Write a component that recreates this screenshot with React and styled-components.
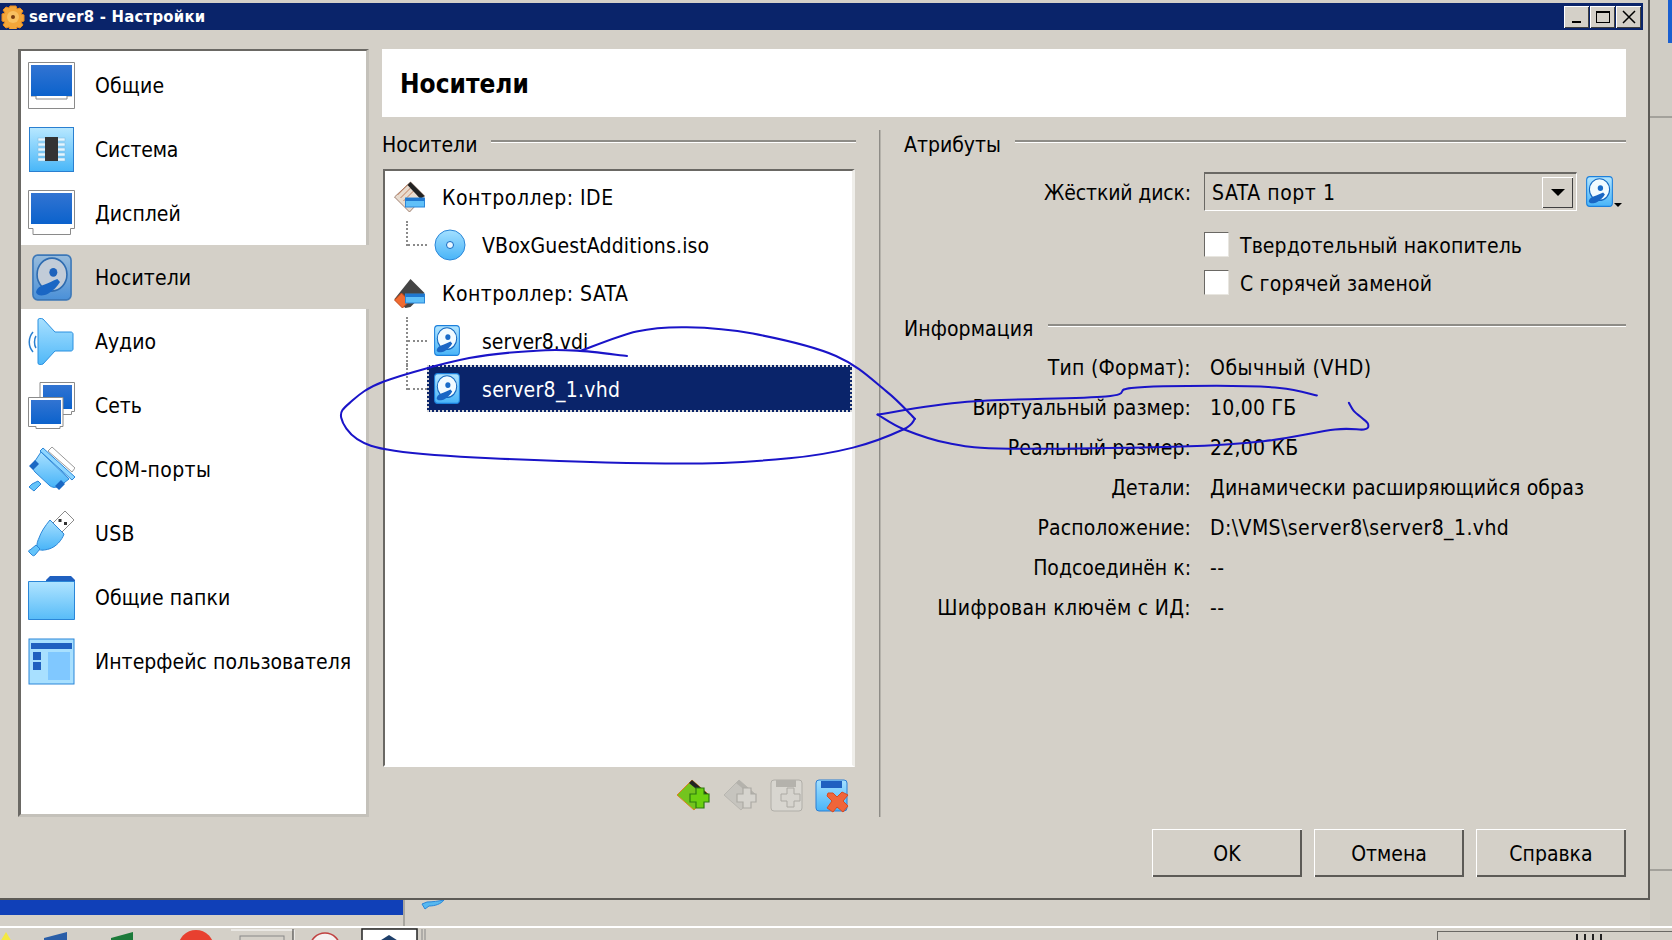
import React from "react";
import styled, { createGlobalStyle } from "styled-components";

const Global = createGlobalStyle`
  html, body { margin: 0; padding: 0; background: #d4d0c8; }
  * { box-sizing: border-box; }
`;

const FONT = `"DejaVu Sans Condensed", "DejaVu Sans", "Noto Sans", sans-serif`;

const Page = styled.div`
  position: relative;
  width: 1672px;
  height: 940px;
  overflow: hidden;
  background: #d4d0c8;
  font-family: ${FONT};
  font-size: 21px;
  color: #000;
  display: flex;
  flex-direction: column;
`;
const Txt = styled.span`
  display: inline-block;
  padding-top: 2px;
  white-space: nowrap;
  letter-spacing: ${(p) => p.$ls || 0}px;
`;
const Desk = styled.div`display: flex; height: 926px; flex: none;`;
const Left = styled.div`width: 1650px; flex: none; display: flex; flex-direction: column;`;
const Win = styled.div`
  height: 900px;
  padding-top: 3px;
  border-right: 2px solid #5c5a56;
  border-bottom: 2px solid #5c5a56;
  display: flex;
  flex-direction: column;
`;
const TitleBar = styled.div`
  height: 27px;
  flex: none;
  margin-right: 5px;
  background: #0a246a;
  display: flex;
  align-items: center;
  padding: 0 1px;
  color: #fff;
  font-weight: 700;
  font-size: 16.5px;
`;
const TitleText = styled.span`margin-left: 4px; letter-spacing: 0.25px;`;
const TitleBtns = styled.div`margin-left: auto; display: flex; gap: 1px; margin-right: 1px;`;
const TitleBtn = styled.div`
  width: 25px;
  height: 22px;
  background: #d4d0c8;
  box-shadow: inset 1px 1px 0 #fff, inset -1px -1px 0 #404040;
  display: flex;
  align-items: center;
  justify-content: center;
`;
const Body = styled.div`
  padding: 19px 22px 0 18px;
  display: flex;
  flex-direction: column;
`;
const Main = styled.div`display: flex; gap: 13px; height: 768px;`;
const Sidebar = styled.div`
  width: 351px;
  flex: none;
  background: #fff;
  border-style: solid;
  border-width: 2px 3px 3px 3px;
  border-color: #6a6864 #c4c1ba #c4c1ba #6a6864;
  padding-top: 2px;
`;
const NavRow = styled.div`
  height: 64px;
  display: flex;
  align-items: center;
  gap: 20px;
  padding-left: 7px;
  background: ${(p) => (p.$active ? "#d4d0c8" : "transparent")};
  margin-right: ${(p) => (p.$active ? "-3px" : "0")};
`;
const IconSlot = styled.div`width: 47px; height: 47px; flex: none; display: flex; align-items: center; justify-content: center;`;
const Content = styled.div`flex: 1; display: flex; flex-direction: column; min-width: 0;`;
const Header = styled.div`
  height: 68px;
  flex: none;
  background: #fff;
  display: flex;
  align-items: center;
  padding: 2px 0 0 18px;
  font-weight: 700;
  font-size: 26px;
`;
const Panes = styled.div`
  margin-top: 13px;
  flex: 1;
  display: grid;
  grid-template-columns: 474px 2px 722px;
  column-gap: 23px;
`;
const Pane = styled.div`display: flex; flex-direction: column; min-width: 0;`;
const Sep = styled.div`background: #8e8c87; border-right: 1px solid #b5b2ab;`;
const Legend = styled.div`
  height: 28px;
  flex: none;
  display: flex;
  align-items: center;
  gap: 14px;
  margin-top: ${(p) => p.$top || 0}px;
`;
const LegendLine = styled.div`
  flex: 1;
  height: 3px;
  margin-bottom: 6px;
  background: #8e8c87;
  border-bottom: 1px solid #fff;
`;
const Tree = styled.div`
  margin: 11px 0 0 1px;
  width: 472px;
  height: 598px;
  flex: none;
  background: #fff;
  border-style: solid;
  border-width: 2px 3px 2px 2px;
  border-color: #6a6864 #efeeea #fff #6a6864;
  padding-top: 2px;
`;
const TreeRow = styled.div`
  height: 48px;
  display: flex;
  align-items: center;
  gap: 16px;
  padding-left: ${(p) => (p.$child ? 21 : 8)}px;
`;
const Branch = styled.div`
  position: relative;
  width: 21px;
  height: ${(p) => (p.$last ? 25 : 48)}px;
  flex: none;
  align-self: flex-start;
  margin-right: -16px;
  border-left: 2px dotted #8a8a8a;
  &::after {
    content: "";
    position: absolute;
    left: 0;
    top: 23px;
    width: 19px;
    border-top: 2px dotted #8a8a8a;
  }
`;
const TreeItem = styled.div`
  flex: 1;
  height: 47px;
  align-self: flex-start;
  display: flex;
  align-items: center;
  gap: 16px;
  padding-left: 7px;
  ${(p) =>
    p.$selected
      ? `background:#0a246a;color:#fff;outline:2px dotted #d8d8d8;outline-offset:-2px;`
      : ""}
`;
const TreeIcon = styled.div`width: 32px; flex: none; display: flex;`;
const IconBar = styled.div`
  flex: 1;
  display: flex;
  align-items: center;
  padding: 8px 7px 0 0;
  justify-content: flex-end;
  gap: 11px;
`;
const FormRow = styled.div`
  display: grid;
  grid-template-columns: 287px 1fr;
  column-gap: 13px;
  align-items: center;
  height: ${(p) => p.$h}px;
  margin-top: ${(p) => p.$top || 0}px;
`;
const RightLabel = styled.div`text-align: right; white-space: nowrap;`;
const ComboWrap = styled.div`display: flex; align-items: center; gap: 9px;`;
const Combo = styled.div`
  width: 373px;
  height: 39px;
  background: #d4d0c8;
  border-style: solid;
  border-width: 2px 1px 1px 1px;
  border-color: #6a6864 #fff #fff #6a6864;
  display: flex;
  align-items: center;
  justify-content: space-between;
  padding: 0 3px 0 7px;
`;
const ComboBtn = styled.div`
  width: 31px;
  height: 31px;
  background: #d4d0c8;
  box-shadow: inset 1px 1px 0 #fff, inset -1px -1px 0 #404040;
  display: flex;
  align-items: center;
  justify-content: center;
`;
const Arrow = styled.div`
  width: 0;
  height: 0;
  border-left: ${(p) => p.$s}px solid transparent;
  border-right: ${(p) => p.$s}px solid transparent;
  border-top: ${(p) => p.$s}px solid #000;
`;
const ToolBtn = styled.div`display: flex; align-items: flex-end; gap: 1px;`;
const CheckRow = styled.div`display: flex; align-items: center; gap: 11px;`;
const Box = styled.div`
  width: 25px;
  height: 25px;
  flex: none;
  background: #fff;
  border-style: solid;
  border-width: 1px;
  border-color: #6a6864 #e8e6e0 #e8e6e0 #6a6864;
`;
const Value = styled.div`padding-left: 6px; white-space: nowrap;`;
const Footer = styled.div`
  margin-top: 12px;
  display: flex;
  justify-content: flex-end;
  gap: 12px;
`;
const Button = styled.div`
  width: 150px;
  height: 48px;
  background: #d4d0c8;
  box-shadow: inset 1px 1px 0 #fff, inset -2px -2px 0 #5c5a56;
  display: flex;
  align-items: center;
  justify-content: center;
`;
const Below = styled.div`display: flex; height: 26px; flex: none;`;
const BlueBar = styled.div`
  width: 403px;
  height: 15px;
  background: #1040b8;
  flex: none;
`;
const BelowRest = styled.div`
  flex: 1;
  border-left: 2px solid #a8a69f;
  padding-left: 16px;
  display: flex;
  align-items: flex-start;
`;
const RightStrip = styled.div`
  flex: 1;
  display: flex;
  flex-direction: column;
  align-items: stretch;
  background: #d0cdc5;
`;
const StripSeg = styled.div`
  height: ${(p) => p.$h}px;
  flex: none;
  border-bottom: 2px solid #a3a19b;
  display: flex;
  justify-content: flex-end;
  align-items: flex-start;
`;
const StripBlue = styled.div`width: 4px; height: 43px; background: #1a5fd0;`;
const Taskbar = styled.div`
  flex: 1;
  border-top: 2px solid #fff;
  background: #d4d0c8;
  display: flex;
  overflow: hidden;
`;
const TaskIcons = styled.svg`width: 460px; height: 14px; flex: none;`;
const Tray = styled.div`
  margin: 3px 0 0 auto;
  width: 235px;
  border-top: 1px solid #6a6864;
  border-left: 1px solid #6a6864;
  background: #d4d0c8;
  display: flex;
  justify-content: flex-end;
  padding-right: 78px;
  gap: 14px;
`;
const TrayTick = styled.div`width: 2px; height: 8px; background: #222; margin-top: 2px; box-shadow: 8px 0 0 #222;`;
const Ink = styled.svg`
  position: absolute;
  left: 0;
  top: 0;
  width: 1672px;
  height: 940px;
  pointer-events: none;
`;

const Grad = ({ id, a, b }) => (
  <linearGradient id={id} x1="0" y1="0" x2="0" y2="1">
    <stop offset="0" stopColor={a} />
    <stop offset="1" stopColor={b} />
  </linearGradient>
);

const Gear = () => (
  <svg width="24" height="24" viewBox="0 0 24 24">
    <path d="M9 1h6l1 3 3-1 3 3-2 3 3 1v6l-3 1 2 3-3 3-3-1-1 3H9l-1-3-3 1-3-3 2-3-3-1V9l3-1-2-3 3-3 3 1z" fill="#f2a63a" stroke="#e88a20" strokeWidth="1" />
    <circle cx="12" cy="12" r="6" fill="#f8c060" />
    <circle cx="12" cy="12" r="2" fill="#7a3d10" />
  </svg>
);

const Monitor = ({ id, notch }) => (
  <svg width="47" height="47" viewBox="0 0 47 47">
    <defs><Grad id={id} a="#3274d2" b="#0b62cc" /></defs>
    {notch ? (
      <>
        <path d="M.5.5h46v46H.5z" fill="#fff" stroke="#8a8a8a" />
        <path d="M3 34h5v3h31v-3h5" fill="none" stroke="#8a8a8a" />
      </>
    ) : (
      <path d="M.5.5h46v38h-4v6H5v-6H.5z" fill="#fff" stroke="#8a8a8a" />
    )}
    <rect x="3" y="3" width="41" height="31" fill={`url(#${id})`} />
  </svg>
);

const Chip = () => (
  <svg width="47" height="47" viewBox="0 0 47 47">
    <defs><Grad id="chipg" a="#b8e8ff" b="#48b6f8" /></defs>
    <rect x="1.500" y="1.500" width="44" height="44" fill="url(#chipg)" stroke="#2a7fd0" />
    {[13, 18, 23, 28, 33].map((y) => (
      <rect key={y} x="10" y={y - 1} width="27" height="3" fill="#e4f6ff" stroke="#7fb8dc" strokeWidth=".5" />
    ))}
    <rect x="17" y="11" width="13" height="24" fill="#333" />
  </svg>
);

const Disk = ({ size = 31, w = 26, muted, id }) => (
  <svg width={w} height={size} viewBox="0 0 30 32" preserveAspectRatio="none">
    <defs>
      {muted ? <Grad id={id} a="#98bcdc" b="#4a90d8" /> : <Grad id={id} a="#b4e6ff" b="#48b4f8" />}
    </defs>
    <rect x=".7" y=".7" width="28.6" height="30.6" rx="3.5" fill={`url(#${id})`} stroke={muted ? "#3d78b8" : "#1c80dc"} strokeWidth="1.2" />
    <circle cx="15" cy="14" r="11.2" fill={muted ? "#c2ccd8" : "#f2fbff"} stroke={muted ? "#2f6cb0" : "#1468c0"} strokeWidth="1.2" />
    <circle cx="16" cy="12.5" r="3" fill={muted ? "#1d62bc" : "#1a6cc8"} />
    <path d="M3 26c1-3 3-4 6-5 3-1 7-3 10-4l2 2c-2 3-5 6-9 8-3 1.500-8 2-9-1z" fill="#1a66c4" />
  </svg>
);

const Speaker = () => (
  <svg width="47" height="47" viewBox="0 0 47 47">
    <defs><Grad id="spk" a="#a8e0ff" b="#50b8f8" /></defs>
    <path d="M5 14C0 20 0 28 5 34" fill="none" stroke="#2a7fd0" strokeWidth="1.500" />
    <path d="M8 18c-2 3-2 9 0 12" fill="none" stroke="#2a7fd0" strokeWidth="1.500" />
    <path d="M10 15V2c0-2 3-2 5-1l12 13h16c1 0 2 1 2 2v15c0 1-1 2-2 2H27L15 46c-2 1-5 1-5-1z" fill="url(#spk)" stroke="#2a90e0" />
  </svg>
);

const Network = () => (
  <svg width="47" height="47" viewBox="0 0 47 47">
    <defs><Grad id="net" a="#3274d2" b="#0b62cc" /></defs>
    <path d="M12 .5h34.500v29h-3v3H12z" fill="#fff" stroke="#8a8a8a" />
    <rect x="15" y="3" width="29" height="24" fill="url(#net)" />
    <path d="M.5 15.500h34.500v29h-3v2H8v-2H.5z" fill="#fff" stroke="#8a8a8a" />
    <rect x="3" y="18" width="30" height="24" fill="url(#net)" />
  </svg>
);

const Com = () => (
  <svg width="47" height="47" viewBox="0 0 47 47">
    <defs><Grad id="com" a="#a8e0ff" b="#48b4f8" /></defs>
    <path d="M24 1l23 21-3 4L20 5z" fill="#fff" stroke="#9a9a9a" />
    <path d="M15 2l32 29-3 3L12 5z" fill="#8ed6ff" stroke="#2a86d8" />
    <path d="M13 6l28 27-9 7c-4 2-8 2-11-1L7 26c-3-3-2-8 0-11z" fill="url(#com)" stroke="#2a86d8" />
    <path d="M1 20l6-6 4 4-6 6zM27 40l6-6 4 4-6 6z" fill="#1a68c4" />
    <path d="M10 35l3 3-7 7-5-4 3-3z" fill="#64c4fa" stroke="#2a86d8" />
  </svg>
);

const Usb = () => (
  <svg width="47" height="47" viewBox="0 0 47 47">
    <defs><Grad id="usb" a="#a8e0ff" b="#48b4f8" /></defs>
    <path d="M25 13L37 1l9 9-12 12z" fill="#fff" stroke="#8a8a8a" />
    <rect x="30.500" y="9" width="3" height="3" fill="#333" />
    <rect x="36" y="12" width="3" height="3" fill="#333" />
    <path d="M22 10l14 14c-2 6-8 13-15 15-4 1-8 2-11 0-2-2-1-7 1-11 2-6 6-12 11-18z" fill="url(#usb)" stroke="#2a86d8" />
    <path d="M8 35l4 4-5 6c-1 1-2 1-3 0l-3-3c-1-1 0-2 1-2z" fill="#64c4fa" stroke="#2a86d8" />
  </svg>
);

const Folder = () => (
  <svg width="47" height="47" viewBox="0 0 47 47">
    <defs><Grad id="fold" a="#b0e4ff" b="#58bcf8" /></defs>
    <path d="M18 6l4-4h21l4 4v4H18z" fill="#1f60c0" />
    <path d="M.5 7.500H18l2 0h26.500v38H.5z" fill="url(#fold)" stroke="#2a86d8" />
  </svg>
);

const UiWin = () => (
  <svg width="47" height="47" viewBox="0 0 47 47">
    <rect x="1" y="1" width="45" height="45" fill="#a8e0ff" stroke="#2a86d8" />
    <rect x="3" y="5" width="41" height="6" fill="#1f60c0" />
    <rect x="5" y="14" width="8" height="8" fill="#1f60c0" />
    <rect x="5" y="24" width="8" height="8" fill="#1f60c0" />
    <rect x="20" y="14" width="22" height="28" fill="#80c8ff" />
  </svg>
);

const Ctrl = ({ sata }) => (
  <svg width="33" height="32" viewBox="0 0 32 32">
    {sata ? (
      <>
        <path d="M1 22L17 2l14 14-14 14-5 1z" fill="#444" />
        <path d="M1 23l7-7 8 8-7 7z" fill="#f06a30" stroke="#c04818" />
      </>
    ) : (
      <>
        <path d="M1 16L17 1l14 14-15 16z" fill="#e8dcd0" stroke="#a08070" />
        <path d="M4 14l10-10M7 17l10-10M10 20l10-10" stroke="#c08060" />
        <path d="M17 1l14 14-4 3L14 4z" fill="#222" />
      </>
    )}
    <rect x="12" y="17" width="19" height="9" fill="#60c0f8" stroke="#2a86d8" />
    <rect x="12" y="17" width="19" height="3" fill="#1f78d0" />
  </svg>
);

const Cd = () => (
  <svg width="32" height="32" viewBox="0 0 32 32">
    <defs><Grad id="cd" a="#a4e0ff" b="#48b4f8" /></defs>
    <circle cx="16" cy="16" r="15" fill="url(#cd)" stroke="#2a86d8" />
    <circle cx="16" cy="16" r="3.500" fill="#e8f6ff" stroke="#1468c0" />
  </svg>
);

const Plus = ({ fill, stroke }) => (
  <path d="M17 14h6v-6h8v6h5v8h-5v6h-8v-6h-6z" transform="translate(-3 2)" fill={fill} stroke={stroke} strokeWidth="1.200" />
);

const AddCtrl = () => (
  <svg width="36" height="36" viewBox="0 0 36 36">
    <path d="M1 17L16 2l16 14-14 16z" fill="#74c41e" stroke="#e08020" />
    <path d="M16 2l17 15-3 2L13 5z" fill="#222" />
    <Plus fill="#6cd010" stroke="#2c7a10" />
  </svg>
);
const AddCtrlGray = () => (
  <svg width="36" height="36" viewBox="0 0 36 36">
    <path d="M1 17L16 2l16 14-14 16z" fill="#c6c4be" stroke="#b8b6b0" />
    <path d="M16 2l17 15-3 2L13 5z" fill="#b4b2ac" />
    <Plus fill="#d6d4ce" stroke="#acaaa4" />
  </svg>
);
const AddDiskGray = () => (
  <svg width="34" height="34" viewBox="0 0 34 34">
    <rect x="1" y="1" width="31" height="31" rx="3" fill="#d8d6d0" stroke="#b0aea8" />
    <rect x="6" y="1" width="20" height="7" fill="#b4b2ac" />
    <path d="M11 15h6v-6h7v6h6v7h-6v6h-7v-6h-6z" fill="#d6d4ce" stroke="#acaaa4" />
  </svg>
);
const DelDisk = () => (
  <svg width="34" height="34" viewBox="0 0 34 34">
    <defs><Grad id="del" a="#a4e0ff" b="#48b4f8" /></defs>
    <rect x="1" y="1" width="31" height="31" rx="3" fill="url(#del)" stroke="#2a7ed4" />
    <rect x="6" y="2" width="21" height="7" fill="#1f60c0" />
    <path d="M13 14l5 0 4 4 5-5 6 3-5 6 5 5-5 6-6-5-4 5-6-4 5-7-5-5z" fill="#f0653a" stroke="#d94a20" />
  </svg>
);

function smooth(pts) {
  let d = `M${pts[0][0]} ${pts[0][1]}`;
  for (let i = 0; i < pts.length - 1; i++) {
    const p0 = pts[i - 1] || pts[i];
    const p1 = pts[i];
    const p2 = pts[i + 1];
    const p3 = pts[i + 2] || p2;
    const c1 = [p1[0] + (p2[0] - p0[0]) / 6, p1[1] + (p2[1] - p0[1]) / 6];
    const c2 = [p2[0] - (p3[0] - p1[0]) / 6, p2[1] - (p3[1] - p1[1]) / 6];
    d += `C${c1[0].toFixed(1)} ${c1[1].toFixed(1)} ${c2[0].toFixed(1)} ${c2[1].toFixed(1)} ${p2[0]} ${p2[1]}`;
  }
  return d;
}

const STROKES = [
  [[588,334],[541,329],[503,329],[440,336],[360,358],[328,378],[320,392],[335,412],[370,423],[460,430],[640,435],[740,430],[800,420],[847,403],[858,393]],
  [[858,393],[831,367],[784,334],[706,313],[644,307],[597,311],[545,329]],
  [[823,389],[907,377],[1037,372],[1061,364],[1141,362],[1200,364],[1235,371]],
  [[823,389],[848,403],[890,416],[947,421],[1108,419],[1185,414],[1252,403],[1279,403],[1283,398],[1277,392],[1270,386],[1265,378]],
];

const NAV = [
  ["Общие", <Monitor id="m1" notch />, false, 0.2],
  ["Система", <Chip />, false, -0.15],
  ["Дисплей", <Monitor id="m2" />, false, 0],
  ["Носители", <Disk size={47} w={40} muted id="dnav" />, true, 0.1],
  ["Аудио", <Speaker />, false, 0],
  ["Сеть", <Network />, false, 0],
  ["COM-порты", <Com />, false, 0.35],
  ["USB", <Usb />, false, 0.3],
  ["Общие папки", <Folder />, false, 0.1],
  ["Интерфейс пользователя", <UiWin />, false, 0.05],
];

const INFO = [
  ["Тип (Формат):", "Обычный (VHD)", 0.25, 0.55],
  ["Виртуальный размер:", "10,00 ГБ", 0.05, 0.25],
  ["Реальный размер:", "22,00 КБ", 0.12, 0.25],
  ["Детали:", "Динамически расширяющийся образ", 0, 0.13],
  ["Расположение:", "D:\\VMS\\server8\\server8_1.vhd", 0.1, 0.42],
  ["Подсоединён к:", "--", 0, 0.4],
  ["Шифрован ключём с ИД:", "--", 0.3, 0.4],
];

export default function App() {
  return (
    <Page>
      <Global />
      <Desk>
        <Left>
          <Win>
            <TitleBar>
              <Gear />
              <TitleText>server8 - Настройки</TitleText>
              <TitleBtns>
                <TitleBtn>
                  <svg width="14" height="14" viewBox="0 0 14 14"><rect x="2" y="11" width="9" height="2" fill="#000" /></svg>
                </TitleBtn>
                <TitleBtn>
                  <svg width="16" height="14" viewBox="0 0 16 14"><rect x="1.500" y="1.500" width="13" height="11" fill="none" stroke="#000" /><rect x="1" y="1" width="14" height="2" fill="#000" /></svg>
                </TitleBtn>
                <TitleBtn>
                  <svg width="16" height="16" viewBox="0 0 16 16"><path d="M2 2l12 12M14 2L2 14" stroke="#000" strokeWidth="1.500" /></svg>
                </TitleBtn>
              </TitleBtns>
            </TitleBar>
            <Body>
              <Main>
                <Sidebar>
                  {NAV.map(([label, icon, active, ls]) => (
                    <NavRow key={label} $active={active}>
                      <IconSlot>{icon}</IconSlot>
                      <Txt $ls={ls}>{label}</Txt>
                    </NavRow>
                  ))}
                </Sidebar>
                <Content>
                  <Header>Носители</Header>
                  <Panes>
                    <Pane>
                      <Legend>
                        <Txt>Носители</Txt>
                        <LegendLine />
                      </Legend>
                      <Tree>
                        <TreeRow>
                          <Ctrl />
                          <Txt $ls={0.5}>Контроллер: IDE</Txt>
                        </TreeRow>
                        <TreeRow $child>
                          <Branch $last />
                          <TreeItem><TreeIcon><Cd /></TreeIcon><Txt $ls={0.15}>VBoxGuestAdditions.iso</Txt></TreeItem>
                        </TreeRow>
                        <TreeRow>
                          <Ctrl sata />
                          <Txt $ls={0.5}>Контроллер: SATA</Txt>
                        </TreeRow>
                        <TreeRow $child>
                          <Branch />
                          <TreeItem><TreeIcon><Disk id="d1" /></TreeIcon><Txt>server8.vdi</Txt></TreeItem>
                        </TreeRow>
                        <TreeRow $child>
                          <Branch $last />
                          <TreeItem $selected><TreeIcon><Disk id="d2" /></TreeIcon><Txt $ls={0.3}>server8_1.vhd</Txt></TreeItem>
                        </TreeRow>
                      </Tree>
                      <IconBar>
                        <AddCtrl />
                        <AddCtrlGray />
                        <AddDiskGray />
                        <DelDisk />
                      </IconBar>
                    </Pane>
                    <Sep />
                    <Pane>
                      <Legend>
                        <Txt>Атрибуты</Txt>
                        <LegendLine />
                      </Legend>
                      <FormRow $h={39} $top={14}>
                        <RightLabel><Txt $ls={-0.15}>Жёсткий диск:</Txt></RightLabel>
                        <ComboWrap>
                          <Combo>
                            <Txt $ls={0.55}>SATA порт 1</Txt>
                            <ComboBtn><Arrow $s={7} /></ComboBtn>
                          </Combo>
                          <ToolBtn>
                            <Disk id="d3" w={27} size={31} />
                            <Arrow $s={4} />
                          </ToolBtn>
                        </ComboWrap>
                      </FormRow>
                      <FormRow $h={39} $top={14}>
                        <span />
                        <CheckRow><Box /><Txt $ls={0.1}>Твердотельный накопитель</Txt></CheckRow>
                      </FormRow>
                      <FormRow $h={39} $top={-1}>
                        <span />
                        <CheckRow><Box /><Txt $ls={0.2}>С горячей заменой</Txt></CheckRow>
                      </FormRow>
                      <Legend $top={12}>
                        <Txt $ls={0.1}>Информация</Txt>
                        <LegendLine />
                      </Legend>
                      {INFO.map(([k, v, lk, lv], i) => (
                        <FormRow key={k} $h={40} $top={i === 0 ? 5 : 0}>
                          <RightLabel><Txt $ls={lk}>{k}</Txt></RightLabel>
                          <Value><Txt $ls={lv}>{v}</Txt></Value>
                        </FormRow>
                      ))}
                    </Pane>
                  </Panes>
                </Content>
              </Main>
              <Footer>
                <Button><Txt>OK</Txt></Button>
                <Button><Txt>Отмена</Txt></Button>
                <Button><Txt>Справка</Txt></Button>
              </Footer>
            </Body>
          </Win>
          <Below>
            <BlueBar />
            <BelowRest>
              <svg width="24" height="10" viewBox="0 0 24 10">
                <path d="M1 4l5-2c5 0 12-1 17-2-3 4-9 6-15 6L4 9z" fill="#56b8f0" stroke="#2a86d8" />
              </svg>
            </BelowRest>
          </Below>
        </Left>
        <RightStrip>
          <StripSeg $h={118}><StripBlue /></StripSeg>
          <StripSeg $h={753} />
        </RightStrip>
      </Desk>
      <Taskbar>
        <TaskIcons viewBox="0 0 460 14">
          <path d="M0 14L6 4l6 10z" fill="#f4e840" />
          <path d="M44 10l23-6v10H44z" fill="#2a5ea8" />
          <path d="M111 10l22-6v10h-22z" fill="#1c7a3a" />
          <circle cx="196" cy="20" r="18" fill="#e84030" />
          <path d="M231 2h63v12" fill="none" stroke="#fff" />
          <path d="M293 1v13" stroke="#333" />
          <rect x="240" y="8" width="44" height="8" fill="none" stroke="#888" />
          <circle cx="325" cy="20" r="15" fill="#f4f0f0" stroke="#c04040" strokeWidth="1.500" />
          <rect x="362" y="1" width="55" height="16" fill="#fff" stroke="#222" strokeWidth="1.500" />
          <path d="M422 1v13M425 1v13" stroke="#888" />
          <path d="M378 14l11-7 11 7z" fill="#1e3f6a" />
        </TaskIcons>
        <Tray><TrayTick /><TrayTick /></Tray>
      </Taskbar>
      <Ink viewBox="0 0 1568 882" preserveAspectRatio="none">
        {STROKES.map((s, i) => (
          <path key={i} d={smooth(s)} fill="none" stroke="#1a14c8" strokeWidth="1.900" strokeLinecap="round" />
        ))}
      </Ink>
    </Page>
  );
}
